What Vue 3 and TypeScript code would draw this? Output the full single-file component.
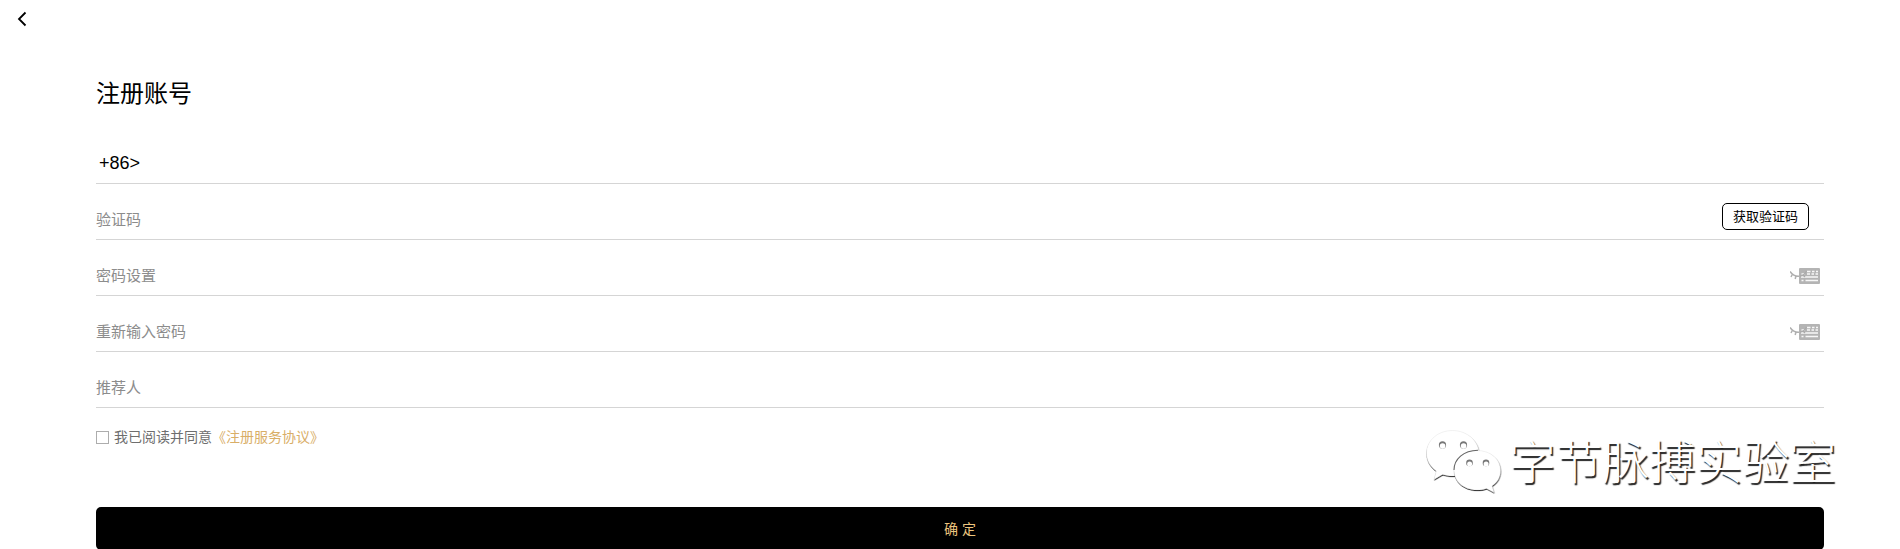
<script setup lang="ts">
import { ref } from 'vue'

interface Field {
  key: string
  label: string
  kind: 'code' | 'password' | 'text'
}

const fields: Field[] = [
  { key: 'code', label: '验证码', kind: 'code' },
  { key: 'password', label: '密码设置', kind: 'password' },
  { key: 'confirm', label: '重新输入密码', kind: 'password' },
  { key: 'referrer', label: '推荐人', kind: 'text' },
]

const values = ref<Record<string, string>>({ code: '', password: '', confirm: '', referrer: '' })
const phone = ref('')
const agreed = ref(false)
</script>

<template>
  <div class="page">
    <header class="topbar">
      <svg class="back" width="10" height="16" viewBox="0 0 10 16">
        <path d="M8.500 1.500 2 8l6.500 6.500" fill="none" stroke="#000" stroke-width="1.8" />
      </svg>
    </header>

    <main class="form">
      <h1 class="title">注册账号</h1>

      <div class="row phone">
        <span class="prefix">+86&gt;</span>
        <input v-model="phone" class="input" type="tel" />
      </div>

      <div v-for="field in fields" :key="field.key" class="row">
        <input
          v-model="values[field.key]"
          class="input"
          :type="field.kind === 'password' ? 'password' : 'text'"
          :placeholder="field.label"
        />
        <button v-if="field.kind === 'code'" class="send" type="button">获取验证码</button>
        <svg v-if="field.kind === 'password'" class="toggle" width="30" height="16" viewBox="0 0 30 16">
          <g fill="none" stroke="#b0b0b0" stroke-width="1.5">
            <path d="M0 3.500C3 7.500 6 8.800 10 8.200M2.800 5.500 1 9M6 7.700 5.200 11" />
          </g>
          <rect x="9" y="0" width="21" height="16" rx="1" fill="#b4b4b4" />
          <g fill="none" stroke="#fff" stroke-width="1.3" opacity=".9">
            <path d="M11 9h17M11.500 12.500h2M15.500 12.500H28M17 3.500h3.500M22 3.500h2.500M26 3.500h2" />
            <path d="M11.500 6h3M17 6h3M21.500 6h2.500M25.500 6H28" stroke-width="1.700" />
          </g>
          <path d="M10 8.200C13 7.500 15 6 16.500 3M13 7l2 2" fill="none" stroke="#aaa" stroke-width="1.200" />
        </svg>
      </div>

      <label class="agree">
        <input v-model="agreed" class="check" type="checkbox" />
        <span>我已阅读并同意</span><a class="link">《注册服务协议》</a>
      </label>

      <button class="submit" type="button">确 定</button>
    </main>

    <div class="watermark">
      <svg class="bubbles" width="80" height="70" viewBox="0 0 80 70">
        <defs>
          <filter id="relief" x="-10%" y="-10%" width="120%" height="120%">
            <feDropShadow dx="0.300" dy="1" stdDeviation="0.700" flood-color="#111" flood-opacity="1" />
          </filter>
        </defs>
        <g fill="#fff" stroke="#bbb" stroke-width=".2">
          <path
            filter="url(#relief)"
            d="M29.500 4.500C15 4.500 3.500 14.500 3.500 27c0 7.500 3.800 13.500 9.800 18L11 53.500l8.500-5c3 .9 6.500 1.500 10 1.500 15 0 26.500-10 26.500-22.500S44 4.500 29.500 4.500Z"
          />
          <path
            filter="url(#relief)"
            d="M54 24.500C40.500 24.500 31 33 31 44S40.500 64 54 64c3.300 0 6.500-.5 9.500-1.500l7.500 4-2-6.500C74.500 56.500 77.500 51 77.500 44.500 77.500 33 67.500 24.500 54 24.500Z"
          />
          <!-- shaded rim where the front bubble overlaps the rear one -->
          <path d="M31 44C31 33 40.500 24.500 55 24.200" fill="none" stroke="#666" stroke-width="1.100" />
        </g>
        <g fill="#777">
          <circle cx="19.500" cy="18.900" r="3.600" /><circle cx="40.500" cy="18.900" r="3.600" />
          <circle cx="46.500" cy="36.900" r="3.300" /><circle cx="63" cy="36.900" r="3.300" />
        </g>
        <g fill="#fff">
          <circle cx="19.600" cy="20" r="2.800" /><circle cx="40.600" cy="20" r="2.800" />
          <circle cx="46.600" cy="38" r="2.500" /><circle cx="63.100" cy="38" r="2.500" />
        </g>
      </svg>
      <span class="brand">字节脉搏实验室</span>
    </div>
  </div>
</template>

<style>
html,
body {
  margin: 0;
  overflow: hidden;
  background: #fff;
}
</style>

<style scoped>
.page {
  position: relative;
  box-sizing: border-box;
  height: 549px;
  overflow: hidden;
  font-family: "Liberation Sans", "Noto Sans CJK SC", sans-serif;
  color: #000;
}
.topbar {
  height: 38px;
  padding: 11px 0 0 17px;
  box-sizing: border-box;
}
.back {
  display: block;
}
.form {
  margin: 0 76px 0 96px;
}
.title {
  margin: 0;
  padding-top: 38px;
  height: 90px;
  box-sizing: border-box;
  font-size: 24px;
  line-height: 36px;
  font-weight: 400;
}
.row {
  display: flex;
  align-items: center;
  box-sizing: border-box;
  height: 56px;
  padding-top: 16px;
  border-bottom: 1px solid #d5d5d5;
}
.prefix {
  padding-left: 3px;
  font-size: 18px;
  line-height: 20px;
}
.phone {
  padding-top: 14px;
}
.input {
  flex: 1;
  min-width: 0;
  padding: 0;
  border: 0;
  outline: 0;
  background: transparent;
  font: 15px/22px "Liberation Sans", "Noto Sans CJK SC", sans-serif;
}
.input::placeholder {
  color: #8c8c8c;
  opacity: 1;
}
.send {
  box-sizing: border-box;
  width: 87px;
  height: 27px;
  margin: 0 15px 6px 0;
  padding: 0;
  border: 1px solid #000;
  border-radius: 5px;
  background: #fff;
  color: #000;
  font: 13px/20px "Liberation Sans", "Noto Sans CJK SC", sans-serif;
}
.toggle {
  margin: 1px 4px 0 0;
}
.agree {
  display: flex;
  align-items: center;
  height: 20px;
  margin-top: 19px;
  font-size: 14px;
  line-height: 20px;
  color: #6e6e6e;
}
.check {
  appearance: none;
  box-sizing: border-box;
  width: 13px;
  height: 13px;
  margin: 0 5px 0 0;
  border: 1px solid #adadad;
  background: #fff;
}
.link {
  color: #d9ae67;
}
.submit {
  display: block;
  width: 100%;
  height: 43px;
  margin-top: 60px;
  padding: 0;
  border: 0;
  border-radius: 5px;
  background: #000;
  color: #edc57f;
  font: 14px/20px "Liberation Sans", "Noto Sans CJK SC", sans-serif;
}
.watermark {
  position: absolute;
  left: 1423px;
  top: 426px;
  display: flex;
  align-items: flex-start;
}
.brand {
  margin-left: 6px;
  padding-top: 2px;
  font-size: 46.700px;
  line-height: 70px;
  font-weight: 300;
  white-space: nowrap;
  color: #fff;
  text-shadow: 1.500px 1.500px 1px #222;
}
</style>
